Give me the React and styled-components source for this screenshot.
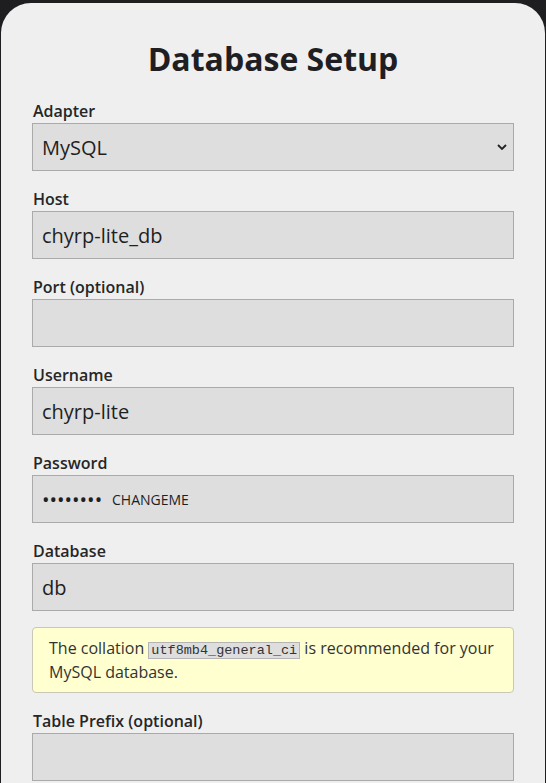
import React from "react";
import styled, { createGlobalStyle } from "styled-components";

const GlobalStyle = createGlobalStyle`
  html, body {
    margin: 0;
    padding: 0;
    background: #1e1e21;
  }
  body {
    font-family: "Open Sans", "Noto Sans", sans-serif;
    color: #1f1f1f;
  }
`;

const Card = styled.div`
  margin: 3px 1px 0 1px;
  padding: 36px 31px 0 31px;
  background: #efefef;
  border-radius: 30px 30px 0 0;
  min-height: 780px;
  box-sizing: border-box;
`;

const Title = styled.h1`
  margin: 0 0 20px;
  font-size: 32px;
  line-height: 40px;
  font-weight: 700;
  text-align: center;
  color: #1f1f23;
`;

const Field = styled.div`
  display: flex;
  flex-direction: column;
  margin-bottom: 16px;
`;

const Label = styled.label`
  font-size: 16px;
  line-height: 24px;
  font-weight: 600;
  color: #262626;
  padding-left: 1px;
`;

const inputBase = `
  box-sizing: border-box;
  width: 100%;
  height: 48px;
  margin: 0;
  background: #dedede;
  border: 1px solid #aaaaaa;
  border-radius: 0;
  color: #1f1f1f;
  font-family: "Open Sans", "Noto Sans", sans-serif;
  outline: none;
`;

const Input = styled.input`
  ${inputBase}
  padding: 0 9px;
  font-size: 20px;
`;

const SelectWrap = styled.div`
  position: relative;
`;

const Select = styled.select`
  ${inputBase}
  appearance: none;
  -webkit-appearance: none;
  padding: 0 24px 0 9px;
  font-size: 20px;
`;

const Chevron = styled.svg`
  position: absolute;
  right: 7px;
  top: 21px;
  width: 10px;
  height: 6px;
  pointer-events: none;
`;

const PasswordBox = styled.div`
  ${inputBase}
  display: flex;
  align-items: center;
  gap: 10px;
  padding: 0 9px;
`;

const Secret = styled.input`
  width: 60px;
  padding: 0;
  margin: 0;
  border: none;
  background: transparent;
  outline: none;
  font-family: "Open Sans", "Noto Sans", sans-serif;
  font-size: 20px;
  color: #1f1f1f;
`;

const Hint = styled.span`
  font-size: 14px;
  color: #1f1f1f;
`;

const Notice = styled.div`
  margin-bottom: 16px;
  padding: 8px 16px;
  background: #ffffd0;
  border: 1px solid #c8c8b4;
  border-radius: 4px;
  font-size: 16px;
  line-height: 24px;
  color: #333;
`;

const Code = styled.code`
  font-family: "Liberation Mono", "DejaVu Sans Mono", monospace;
  font-size: 13.5px;
  line-height: 1;
  background: #dedede;
  border: 1px solid #b4b4b4;
  padding: 0 2px;
`;

const fields = [
  { label: "Host", value: "chyrp-lite_db" },
  { label: "Port (optional)", value: "" },
  { label: "Username", value: "chyrp-lite" },
];

export default function App() {
  return (
    <>
      <GlobalStyle />
      <Card>
        <Title>Database Setup</Title>
        <Field>
          <Label htmlFor="adapter">Adapter</Label>
          <SelectWrap>
            <Select id="adapter" defaultValue="mysql">
              <option value="sqlite">SQLite</option>
              <option value="mysql">MySQL</option>
              <option value="pgsql">PostgreSQL</option>
            </Select>
            <Chevron viewBox="0 0 10 6">
              <path
                d="M1 1l4 4 4-4"
                fill="none"
                stroke="#222"
                strokeWidth="1.8"
              />
            </Chevron>
          </SelectWrap>
        </Field>
        {fields.map((f) => (
          <Field key={f.label}>
            <Label>{f.label}</Label>
            <Input type="text" defaultValue={f.value} />
          </Field>
        ))}
        <Field>
          <Label>Password</Label>
          <PasswordBox>
            <Secret type="password" defaultValue="changeme" />
            <Hint>CHANGEME</Hint>
          </PasswordBox>
        </Field>
        <Field>
          <Label>Database</Label>
          <Input type="text" defaultValue="db" />
        </Field>
        <Notice>
          The collation <Code>utf8mb4_general_ci</Code> is recommended for your
          MySQL database.
        </Notice>
        <Field>
          <Label>Table Prefix (optional)</Label>
          <Input type="text" defaultValue="" />
        </Field>
      </Card>
    </>
  );
}
